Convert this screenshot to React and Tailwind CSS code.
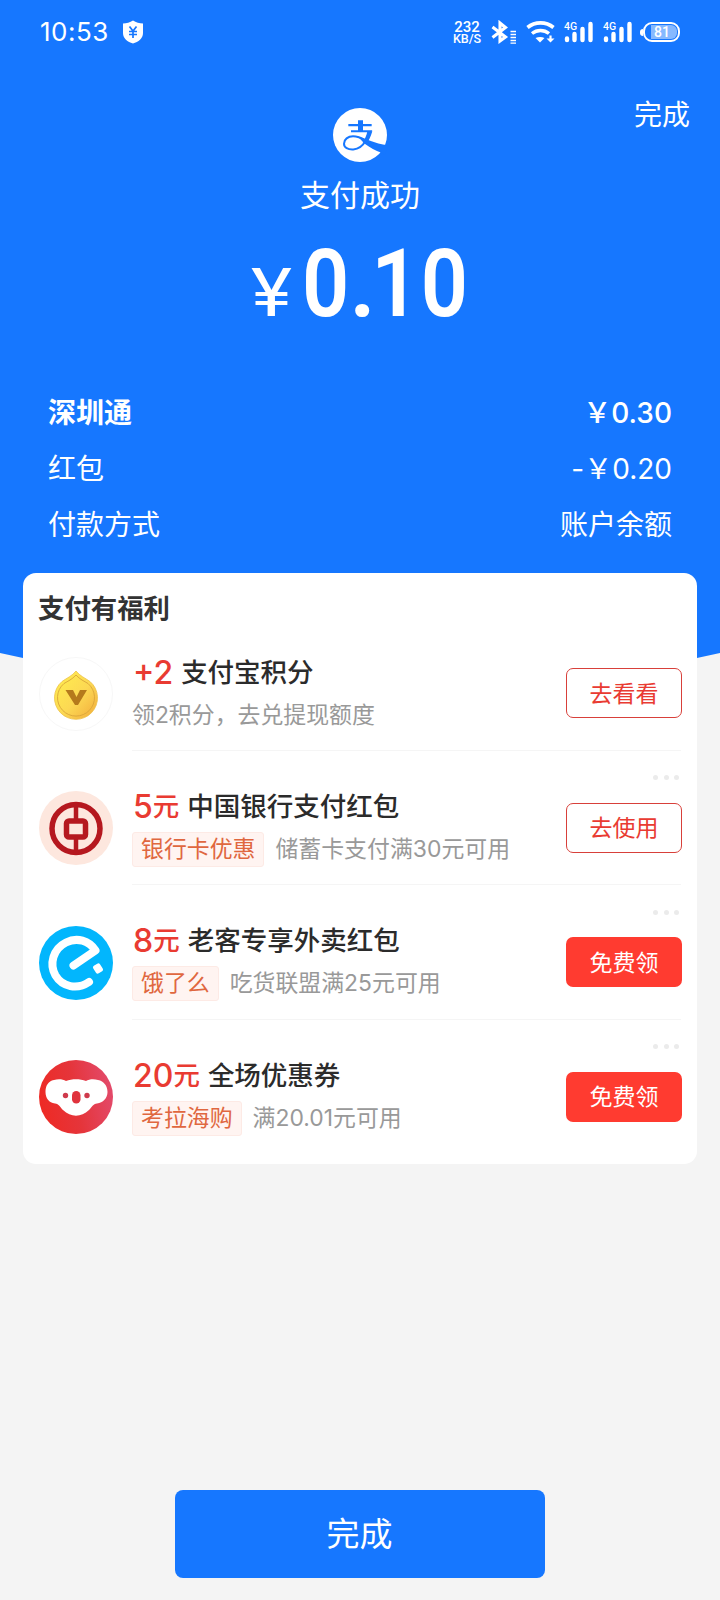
const bills = [
  { label: "深圳通", value: "￥0.30", bold: true },
  { label: "红包", value: "-￥0.20" },
  { label: "付款方式", value: "账户余额" },
];

const offers = [
  { icon: PointsIcon, amount: "+2", title: "支付宝积分", desc: "领2积分，去兑提现额度", action: "去看看" },
  { icon: BankIcon, amount: "5", unit: "元", title: "中国银行支付红包", tag: "银行卡优惠", desc: "储蓄卡支付满30元可用", action: "去使用", more: true },
  { icon: ElemeIcon, amount: "8", unit: "元", title: "老客专享外卖红包", tag: "饿了么", desc: "吃货联盟满25元可用", action: "免费领", solid: true, more: true },
  { icon: KaolaIcon, amount: "20", unit: "元", title: "全场优惠券", tag: "考拉海购", desc: "满20.01元可用", action: "免费领", solid: true, more: true },
];

function AlipayLogo() {
  return (
    <svg className="col-start-2 mt-[2px] size-[54px] justify-self-center" viewBox="23 24 162 162">
      <circle cx="104" cy="105" r="81" fill="#fff" />
      <path d="M69 72H139V79H69ZM98 61H113V94H98ZM77 91H141L138 97H77Z" fill="#1677ff" />
      <path d="M126 94H141C136 110 131 121 124 131L112 127C119 117 124 106 126 94Z" fill="#1677ff" />
      <path d="M120 124C112 138 100 147 84 148.500C68 149.500 56 143 56 131C56 118 68 109 83 109C96 109 108 114 120 121" fill="none" stroke="#1677ff" strokeWidth="6" />
      <path d="M98 110C125 117 152 130 180 135L168 158C150 152 135 142 118 131Z" fill="#1677ff" />
      <path d="M176 134L190 138L178 164L165 157Z" fill="#1677ff" />
    </svg>
  );
}

function PointsIcon() {
  return (
    <svg className="size-[74px]" viewBox="0 0 74 74">
      <defs>
        <linearGradient id="gold" x1="0" y1="0" x2="1" y2="1">
          <stop offset="0" stopColor="#fff04e" />
          <stop offset="0.55" stopColor="#fcd853" />
          <stop offset="1" stopColor="#f2a93a" />
        </linearGradient>
      </defs>
      <circle cx="37" cy="37" r="36.500" fill="#fff" stroke="#f7f7f7" />
      <path d="M37 14C41 19 46 21 51 24.500A21.500 21.500 0 1 1 23 24.500C28 21 33 19 37 14Z" fill="url(#gold)" stroke="#ecc04a" strokeWidth="0.8" />
      <path d="M37 18C41 22.500 45 24 49 26.500A18.500 18.500 0 1 1 25 26.500C29 24 33 22.500 37 18Z" fill="none" stroke="#d9a53a" strokeWidth="0.9" />
      <path d="M26.500 33H34L37.500 40L41 33H48L39 48H36Z" fill="#b57a1c" />
    </svg>
  );
}

function BankIcon() {
  return (
    <svg className="size-[74px]" viewBox="0 0 74 74" fill="none" stroke="#b5181f">
      <circle cx="37" cy="37" r="37" fill="#fde7de" stroke="none" />
      <circle cx="37" cy="37.500" r="24" strokeWidth="5.500" />
      <rect x="27.500" y="30" width="19" height="16" rx="2.500" strokeWidth="5.500" />
      <path d="M37 12V30M37 46V62" strokeWidth="4.500" />
    </svg>
  );
}

function ElemeIcon() {
  return (
    <svg className="size-[74px]" viewBox="0 0 74 74">
      <circle cx="37" cy="37" r="37" fill="#02b6fd" />
      <path
        d="M34.500 39.500L56.500 24.500C50 14.500 38 11 27 16.500C14 23 10 38 16.500 49.500C23.500 61 38 64 50 56"
        fill="none"
        stroke="#fff"
        strokeWidth="8"
        strokeLinecap="round"
        strokeLinejoin="round"
      />
      <rect x="55" y="38" width="8" height="9" rx="2" fill="#fff" transform="rotate(-33 59 42.500)" />
    </svg>
  );
}

function KaolaIcon() {
  return (
    <svg className="size-[74px]" viewBox="0 0 74 74">
      <defs>
        <linearGradient id="kaola" x1="0" y1="0.6" x2="1" y2="0.4">
          <stop offset="0" stopColor="#ee2a24" />
          <stop offset="0.5" stopColor="#e5353b" />
          <stop offset="1" stopColor="#e34a6b" />
        </linearGradient>
      </defs>
      <circle cx="37" cy="37" r="37" fill="url(#kaola)" />
      <path d="M15 20C19 18.500 24 19 27 21C33 18.500 41 18.500 47 21C50 19 55 18.500 59 20C65 21 68.500 26 68.500 32C68.500 38 64 43 58 43.500C54 44 53 47 50 50C42 57.500 32 57.500 24 50C21 47 20 44 16 43.500C10 43 6.500 38 6.500 32C6.500 26 9 21 15 20Z" fill="#fff" />
      <circle cx="26.500" cy="35.500" r="2.700" fill="#cf3a4c" />
      <circle cx="48" cy="35.500" r="2.700" fill="#cf3a4c" />
      <rect x="33" y="31" width="8.500" height="12.500" rx="4.250" fill="#e0333d" />
    </svg>
  );
}

function Signal() {
  return (
    <svg className="h-[22px] w-[30px]" viewBox="0 0 30 22" stroke="#fff" strokeWidth="4.400" strokeLinecap="round">
      <text x="0" y="8.500" fill="#fff" stroke="none" fontSize="10.500" fontWeight="500" fontFamily="Roboto, sans-serif">4G</text>
      <path d="M3 17.500V19M10.500 13V19M18.500 8V19M26.500 3V19" />
    </svg>
  );
}

function StatusBar() {
  return (
    <div className="flex h-16 items-center pl-10 pr-[40px]">
      <span className="w-[68px] whitespace-nowrap text-[26px] leading-none tracking-[0.500px]">10:53</span>
      <svg className="ml-[14px] h-[24px] w-[22px]" viewBox="0 0 22 24">
        <path d="M11 0.500C14 2.500 17.500 3.500 21 3.500V13C21 18.500 16.500 22 11 23.500C5.500 22 1 18.500 1 13V3.500C4.500 3.500 8 2.500 11 0.500Z" fill="#fff" />
        <path d="M7.500 6.500L11 11L14.500 6.500M11 11V18M7 11.500H15M7 14.500H15" fill="none" stroke="#1677ff" strokeWidth="1.700" />
      </svg>
      <div className="ml-auto flex items-center">
        <div className="flex w-7 flex-col items-center pt-[2px] font-[Roboto] font-medium">
          <span className="text-[15px] leading-[12px]">232</span>
          <span className="text-[12.500px] leading-[12px]">KB/S</span>
        </div>
        <svg className="ml-[10px] h-[24px] w-[26px]" viewBox="0 0 26 24" fill="none" stroke="#fff">
          <path d="M1.500 7L14.500 17L9 21V3L14.500 7.500L1.500 17.500" strokeWidth="3.100" />
          <path d="M19.500 11.500H25M19.500 14.500H25M19.500 17.500H25M19.500 20.500H25M19.500 23.200H25" strokeWidth="1.300" />
        </svg>
        <svg className="ml-[9px] h-[22px] w-[29px]" viewBox="0 0 29 22" fill="none" stroke="#fff">
          <path d="M1.500 6.500C9 0.300 20 0.300 27.500 6.500" strokeWidth="3.700" />
          <path d="M6 12.500C11 8.500 18 8.500 23 12.500" strokeWidth="3.500" />
          <path d="M9.500 17C12.500 15.500 16 15.500 18.500 17L14 21.500Z" fill="#fff" stroke="none" />
          <path d="M24.500 14.500V18.500" strokeWidth="2.200" />
          <path d="M20.500 17.500H28.500L24.500 21.500Z" fill="#fff" stroke="none" />
        </svg>
        <div className="ml-[9px] flex gap-[9px]">
          <Signal />
          <Signal />
        </div>
        <div className="ml-[7px] flex items-center">
          <span className="h-[7px] w-[3px] rounded-l-full bg-white" />
          <div className="flex h-5 w-[37px] rounded-[9px] border-2 border-white p-[1px]">
            <span className="ml-[5px] flex flex-1 items-center rounded-r-[6px] bg-[#86b9ff] pl-[3px] font-[Roboto] text-[14px] font-medium leading-none">81</span>
          </div>
        </div>
      </div>
    </div>
  );
}

// each glyph gets its own cell so the figures can be set narrower than the font draws them
function Amount() {
  return (
    <div className="flex h-[120px] items-baseline justify-center pr-[5px] pt-[24px] font-[Roboto] text-[94px] font-semibold leading-[90px]">
      <span className="flex w-[59px] scale-x-[1.18] justify-center text-[66px] font-normal">¥</span>
      <span className="flex w-[49px] scale-x-[0.88] justify-center">0</span>
      <span className="flex w-[26px] justify-center">.</span>
      <span className="flex w-[39px] scale-x-[0.9] justify-center">1</span>
      <span className="flex w-[59px] scale-x-[0.88] justify-center">0</span>
    </div>
  );
}

function OfferRow({ offer, last }) {
  const Icon = offer.icon;
  return (
    <div className="flex h-[134.500px] pl-4">
      <div className="mt-[40.500px] h-[74px] shrink-0">
        <Icon />
      </div>
      <div className={`ml-[19px] mr-4 flex flex-1 border-b ${last ? "border-transparent" : "border-[#f5f5f5]"}`}>
        <div className={`flex-1 ${offer.tag ? "pt-[34px]" : "pt-[35px]"}`}>
          <div className="flex h-[41px] items-start whitespace-nowrap pl-[1px] text-[26.500px] font-medium leading-[42px]">
            <span className="text-[32px] leading-[43px] text-[#e93b32]">{offer.amount}</span>
            {offer.unit && <span className="text-[#e93b32]">{offer.unit}</span>}
            <span className="ml-2 text-[#2b2b2b]">{offer.title}</span>
          </div>
          <div className="mt-[6px] flex h-[35px] items-center whitespace-nowrap text-[22.900px] text-[#999]">
            {offer.tag && (
              <span className="mr-[11px] flex h-[35px] items-center rounded-[3px] border border-[#fdeae5] bg-[#fff4f1] px-[8px] text-[#e0673f]">
                {offer.tag}
              </span>
            )}
            <span>{offer.desc}</span>
          </div>
        </div>
        <div className="-mr-px flex w-[116px] flex-col items-end">
          <div className="mr-[3px] flex h-[52px] items-center gap-[5.500px] pt-[2px]">
            {offer.more && (
              <>
                <i className="size-[5px] rounded-full bg-[#ebebeb]" />
                <i className="size-[5px] rounded-full bg-[#ebebeb]" />
                <i className="size-[5px] rounded-full bg-[#ebebeb]" />
              </>
            )}
          </div>
          <button
            className={`h-[50px] w-[116px] rounded-[7px] pt-[2px] text-[23px] leading-none ${
              offer.solid ? "bg-[#ff3b30] text-white" : "border border-[#d8403a] text-[#e93b32]"
            }`}
          >
            {offer.action}
          </button>
        </div>
      </div>
    </div>
  );
}

export default function App() {
  return (
    <div className="flex h-[1600px] w-[720px] flex-col overflow-hidden bg-[#f4f4f4] font-[Inter,'Noto_Sans_CJK_SC',sans-serif]">
      <header className="h-[731px] shrink-0 bg-[#1677ff] text-white [clip-path:polygon(0_0,100%_0,100%_653px,50%_100%,0_653px)]">
        <StatusBar />
        <div className="mt-[42px] grid h-[62px] grid-cols-3 items-start px-[30px]">
          <AlipayLogo />
          <span className="-mt-[11px] justify-self-end text-[28px] leading-[40px]">完成</span>
        </div>
        <div className="mt-[7px] text-center text-[30px] leading-[40px]">支付成功</div>
        <Amount />
        <div className="mt-[50px] flex flex-col px-12">
          {bills.map((b) => (
            <div key={b.label} className={`flex h-14 items-center justify-between text-[28px] ${b.bold ? "font-medium" : ""}`}>
              <span className={b.bold ? "font-bold" : ""}>{b.label}</span>
              <span>{b.value}</span>
            </div>
          ))}
        </div>
      </header>

      <section className="relative mx-[23px] -mt-[158px] h-[591px] rounded-[13px] bg-white">
        <h2 className="h-[43px] pl-[15px] pt-[15px] text-[26.400px] font-bold leading-[40px] text-[#333]">支付有福利</h2>
        {offers.map((o, i) => (
          <OfferRow key={o.title} offer={o} last={i === offers.length - 1} />
        ))}
      </section>

      <button className="mx-auto mb-[22px] mt-auto h-[88px] w-[370px] rounded-[8px] bg-[#1677ff] pr-[1px] pt-[2px] text-[33px] text-white">
        完成
      </button>
    </div>
  );
}
